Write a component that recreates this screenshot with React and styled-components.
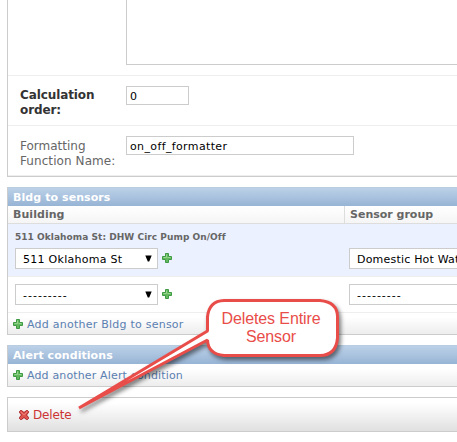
import React from "react";
import styled, { createGlobalStyle, css } from "styled-components";

const GlobalStyle = createGlobalStyle`
  * { box-sizing: border-box; }
  html, body { margin: 0; padding: 0; background: #fff; overflow: hidden; }
  body { font: 12px/15px "DejaVu Sans", Verdana, sans-serif; color: #333; }
`;

const Page = styled.main`
  position: relative;
  width: 457px;
  height: 442px;
  padding-left: 7px;
  overflow: hidden;
`;

const Text = styled.span`
  display: inline-block;
  white-space: nowrap;
  font-size: ${(p) => p.$size || 12}px;
  letter-spacing: ${(p) => p.$spacing || 0}px;
`;

const Fieldset = styled.section`
  height: 177px;
  border-left: 1px solid #ccc;
  border-bottom: 1px solid #ccc;
`;

const FormRow = styled.div`
  display: flex;
  height: ${(p) => p.$height}px;
  padding: ${(p) => p.$top}px 0 0 12px;
  border-bottom: 1px solid #eee;
`;

const Label = styled.label`
  display: flex;
  flex-direction: column;
  flex: 0 0 106px;
  padding-top: ${(p) => (p.$required ? 2 : 3)}px;
  color: ${(p) => (p.$required ? "#333" : "#666")};
  font-weight: ${(p) => (p.$required ? "bold" : "normal")};
`;

const TextArea = styled.div`
  width: 360px;
  height: 65px;
  flex: none;
  border: 1px solid #ccc;
  border-top: 0;
`;

const Input = styled.div`
  width: ${(p) => p.$width}px;
  height: 19px;
  padding: 2px 0 0 3px;
  border: 1px solid #ccc;
  background: #fff;
  color: #000;
  font-size: 11px;
`;

const Module = styled.section`
  margin-top: ${(p) => p.$gap}px;
  border-left: 1px solid #ccc;
  border-bottom: 1px solid #ccc;
`;

const ModuleTitle = styled.h2`
  height: 19px;
  margin: 0;
  padding: 3px 0 0 5px;
  border-top: 1px solid #b9cde2;
  background: linear-gradient(#bcd1e8, #97b4d5);
  color: #fff;
  font-size: 11px;
  line-height: 14px;
`;

const columns = css`
  display: grid;
  grid-template-columns: 336px 113px;
`;

const HeadRow = styled.div`
  ${columns}
  height: 18px;
  border-bottom: 1px solid #ddd;
  background: linear-gradient(#fff, #f5f5f5);
  color: #666;
  font-weight: bold;
`;

const HeadCell = styled.div`
  padding: 1px 0 0 5px;
  border-left: ${(p) => (p.$divided ? "1px solid #ddd" : "0")};
`;

const SensorRow = styled.div`
  height: ${(p) => p.$height}px;
  padding-top: ${(p) => p.$top}px;
  border-bottom: 1px solid #eee;
  background: ${(p) => (p.$existing ? "#ebf1ff" : "#fff")};
`;

const Original = styled.p`
  height: 18px;
  margin: 0;
  padding-left: 7px;
  color: #666;
  font-weight: bold;
  line-height: 12px;
`;

const Fields = styled.div`
  ${columns}
`;

const Field = styled.div`
  display: flex;
  align-items: flex-start;
  gap: 4px;
  padding-left: ${(p) => p.$inset}px;
`;

const Select = styled.div`
  display: flex;
  justify-content: space-between;
  flex: none;
  width: ${(p) => p.$width}px;
  height: 21px;
  padding: 3px 5px 0 7px;
  border: 1px solid #ccc;
  background: #fff;
  color: #000;
`;

const AddRow = styled.div`
  display: flex;
  gap: 4px;
  height: ${(p) => p.$height}px;
  padding: 4px 0 0 5px;
  background: linear-gradient(#fff 20%, #ededed);
  color: #5b80b2;
`;

const SubmitRow = styled.footer`
  display: flex;
  gap: 4px;
  height: 35px;
  margin-top: 10px;
  padding: 10px 0 0 11px;
  border: 1px solid #ccc;
  border-right: 0;
  background: linear-gradient(#fff 15%, #e0e0e0);
  color: #cc3434;
`;

const Icon = styled.svg`
  display: block;
  flex: none;
  margin-top: ${(p) => p.$top || 0}px;
`;

const Callout = styled.aside`
  position: absolute;
  inset: 0;
  color: #e94d49;
  font: 16px/18px "Liberation Sans", Arial, sans-serif;
  letter-spacing: -0.12px;
`;

const CalloutShape = styled.svg`
  display: block;
  filter: drop-shadow(2px 3px 2px rgba(0, 0, 0, 0.5));
`;

const CalloutText = styled.div`
  position: absolute;
  left: 208px;
  top: 310px;
  display: flex;
  flex-direction: column;
  align-items: center;
  width: 126px;
`;

const Plus = ({ top }) => (
  <Icon $top={top} width="10" height="10" viewBox="0 0 10 10">
    <path d="M3.5 .5h3v3h3v3h-3v3h-3v-3h-3v-3h3z" fill="#64b95f" stroke="#3e9a43" />
    <path d="M4.5 1.5v3h-3M5.5 4.5h3" fill="none" stroke="#98d58f" />
  </Icon>
);

const Cross = () => (
  <Icon $top={2} width="10" height="10" viewBox="0 0 10 10">
    <path
      d="M1.5 .5h1l2.5 2 2.5-2h1l1 1v1l-2 2.5 2 2.5v1l-1 1h-1l-2.5-2-2.5 2h-1l-1-1v-1l2-2.5-2-2.5v-1z"
      fill="#df5650"
      stroke="#a91f22"
    />
    <path d="M2 2l3 3 3-3" fill="none" stroke="#f08a80" strokeWidth=".8" />
  </Icon>
);

const Arrow = () => (
  <Icon $top={3} width="7" height="7" viewBox="0 0 7 7">
    <path d="M.3 .5h6.4L4.2 6.5H2.8z" fill="#000" />
  </Icon>
);

const Dropdown = ({ width, children, spacing }) => (
  <Select $width={width}>
    <Text $size={11} $spacing={spacing}>{children}</Text>
    {width < 200 && <Arrow />}
  </Select>
);

export default function App() {
  return (
    <>
      <GlobalStyle />
      <Page>
        <Fieldset>
          <FormRow $height={76} $top={0}>
            <Label />
            <TextArea />
          </FormRow>
          <FormRow $height={50} $top={10}>
            <Label $required>
              <Text $spacing={-0.1}>Calculation</Text>
              <Text $spacing={-0.1}>order:</Text>
            </Label>
            <Input $width={63}><Text $size={11}>0</Text></Input>
          </FormRow>
          <FormRow $height={50} $top={10}>
            <Label>
              <Text>Formatting</Text>
              <Text $spacing={0.08}>Function Name:</Text>
            </Label>
            <Input $width={228}><Text $size={11} $spacing={0.37}>on_off_formatter</Text></Input>
          </FormRow>
        </Fieldset>

        <Module $gap={10}>
          <ModuleTitle><Text $size={11} $spacing={0.08}>Bldg to sensors</Text></ModuleTitle>
          <HeadRow>
            <HeadCell><Text $size={11} $spacing={0.05}>Building</Text></HeadCell>
            <HeadCell $divided><Text $size={11}>Sensor group</Text></HeadCell>
          </HeadRow>
          <SensorRow $height={53} $top={6} $existing>
            <Original><Text $size={9} $spacing={0.05}>511 Oklahoma St: DHW Circ Pump On/Off</Text></Original>
            <Fields>
              <Field $inset={7}>
                <Dropdown width={143} spacing={0.28}>511 Oklahoma St</Dropdown>
                <Plus top={5} />
              </Field>
              <Field $inset={5}><Dropdown width={240} spacing={0.2}>Domestic Hot Water</Dropdown></Field>
            </Fields>
          </SensorRow>
          <SensorRow $height={36} $top={7}>
            <Fields>
              <Field $inset={7}>
                <Dropdown width={143} spacing={1}>---------</Dropdown>
                <Plus top={5} />
              </Field>
              <Field $inset={5}><Dropdown width={240} spacing={1}>---------</Dropdown></Field>
            </Fields>
          </SensorRow>
          <AddRow $height={21}>
            <Plus top={2} />
            <Text $size={11} $spacing={0.24}>Add another Bldg to sensor</Text>
          </AddRow>
        </Module>

        <Module $gap={10}>
          <ModuleTitle><Text $size={11} $spacing={0.06}>Alert conditions</Text></ModuleTitle>
          <AddRow $height={22}>
            <Plus top={2} />
            <Text $size={11} $spacing={0.15}>Add another Alert condition</Text>
          </AddRow>
        </Module>

        <SubmitRow>
          <Cross />
          <Text $spacing={-0.15}>Delete</Text>
        </SubmitRow>

        <Callout>
          <CalloutShape width="457" height="442" viewBox="0 0 457 442">
            <path
              d="M224 300.5H320Q337.500 302 337.500 317V338Q336 355.500 320 355.500H224Q208 354 207.500 340L79 408 207.500 331V317Q209 301 224 300.500Z"
              fill="#fff"
              stroke="#e94d49"
              strokeWidth="3"
              strokeLinejoin="bevel"
            />
          </CalloutShape>
          <CalloutText>
            <span>Deletes Entire</span>
            <span>Sensor</span>
          </CalloutText>
        </Callout>
      </Page>
    </>
  );
}
